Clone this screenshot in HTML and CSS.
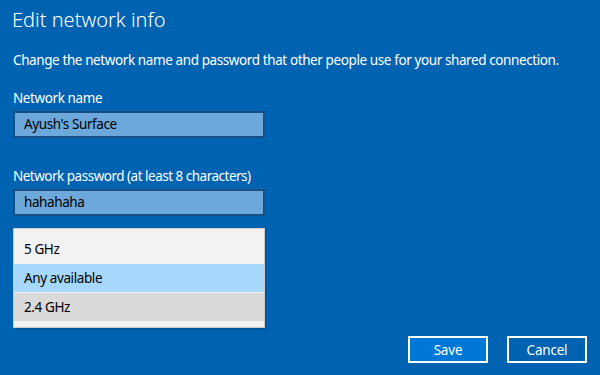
FILE: index.html
```html
<!DOCTYPE html>
<html>
<head>
<meta charset="utf-8">
<link rel="stylesheet" href="styles.css">
</head>
<body>
<div class="page">
  <h1 class="title">Edit network info</h1>
  <p class="desc">Change the network name and password that other people use for your shared connection.</p>
  <div class="field">
    <div class="label">Network name</div>
    <div class="input">Ayush's Surface</div>
  </div>
  <div class="field pw">
    <div class="label">Network password (at least 8 characters)</div>
    <div class="input">hahahaha</div>
  </div>
  <div class="dropdown">
    <div class="item">5 GHz</div>
    <div class="item selected">Any available</div>
    <div class="item hover">2.4 GHz</div>
  </div>
  <div class="actions">
    <button class="btn primary">Save</button>
    <button class="btn">Cancel</button>
  </div>
</div>
</body>
</html>
```
FILE: styles.css
```css
html, body {
  margin: 0;
  padding: 0;
  width: 600px;
  height: 375px;
  overflow: hidden;
  background: #0063b1;
}
.page {
  font-family: "Noto Sans", "Open Sans", sans-serif;
  color: #ffffff;
  padding: 0 13px 0 13px;
  box-sizing: border-box;
  width: 600px;
  height: 375px;
  display: flex;
  flex-direction: column;
  font-size: 13.5px;
  letter-spacing: -0.4px;
}
.title {
  margin: 6px 0 0 -1px;
  font-size: 20px;
  font-weight: 300;
  line-height: 28px;
  letter-spacing: 0;
}
.desc {
  margin: 17px 0 0 0;
  line-height: 18px;
}
.field {
  display: flex;
  flex-direction: column;
}
.field .label {
  margin-top: 20px;
  line-height: 18px;
}
.field.pw .label {
  margin-top: 29px;
  letter-spacing: -0.5px;
}
.input {
  margin-top: 4px;
  width: 252px;
  height: 27px;
  box-sizing: border-box;
  border: 2px solid #174f84;
  background: #6ca8d9;
  color: #000000;
  line-height: 23px;
  padding-left: 9px;
}
.dropdown {
  margin-top: 12px;
  width: 252px;
  box-sizing: border-box;
  background: #f2f2f2;
  border: 1px solid #cccccc;
  box-shadow: 1px 1px 2px rgba(0,0,0,0.25);
  padding: 6px 0 6px 0;
  color: #000000;
}
.item {
  height: 28px;
  line-height: 28px;
  padding-left: 10px;
  margin-top: 1px;
}
.item:first-child {
  margin-top: 0;
}
.item.selected {
  background: #a6d8fc;
}
.item.hover {
  background: #dadada;
}
.actions {
  margin-top: 8px;
  display: flex;
  justify-content: flex-end;
  gap: 19px;
}
.btn {
  width: 80px;
  height: 27px;
  box-sizing: border-box;
  border: 2px solid #ffffff;
  background: #0063b1;
  color: #ffffff;
  font-family: "Noto Sans", "Open Sans", sans-serif;
  font-size: 13.5px;
  letter-spacing: -0.2px;
  padding: 0;
}
.btn.primary {
  background: #0078d7;
}
```
